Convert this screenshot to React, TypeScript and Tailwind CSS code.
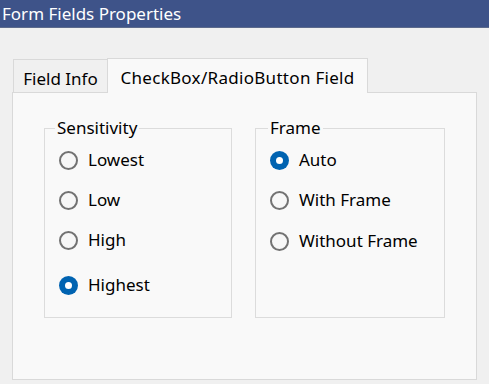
import { useState } from 'react';

type RadioProps = {
  label: string;
  checked: boolean;
  onSelect: () => void;
  className?: string;
};

function Radio({ label, checked, onSelect, className = '' }: RadioProps) {
  return (
    <label
      onClick={onSelect}
      className={`flex items-center h-[24px] gap-[10px] cursor-default ${className}`}
    >
      {checked ? (
        <span className="flex items-center justify-center w-[19px] h-[19px] rounded-full bg-[#0063b1]">
          <span className="w-[7px] h-[7px] rounded-full bg-white" />
        </span>
      ) : (
        <span className="w-[19px] h-[19px] rounded-full border-2 border-[#727272] bg-[#f7f7f7]" />
      )}
      <span className="text-[17px] leading-[24px] text-black">{label}</span>
    </label>
  );
}

const sensitivityOptions = ['Lowest', 'Low', 'High', 'Highest'];
const frameOptions = ['Auto', 'With Frame', 'Without Frame'];
// spacing between rows in the dialog is not uniform
const sensitivityGaps = ['mt-[9px]', 'mt-[16px]', 'mt-[16px]', 'mt-[21px]'];
const frameGaps = ['mt-[9px]', 'mt-[16px]', 'mt-[17px]'];

export default function App() {
  const [sensitivity, setSensitivity] = useState('Highest');
  const [frame, setFrame] = useState('Auto');
  const [tab, setTab] = useState(1);

  return (
    <div className="w-[489px] h-[384px] overflow-hidden bg-[#f0f0f0] font-['Noto_Sans',sans-serif]">
      {/* Title bar */}
      <div className="h-[28px] bg-[#3e5389] border-b border-[#5c6a8c] pl-[2px] text-[17px] leading-[27px] text-white">
        Form Fields Properties
      </div>

      <div className="px-[12px] pt-[29px]">
        {/* Tabs */}
        <div className="flex items-end pl-[1px] h-[35px]">
          <button
            onClick={() => setTab(0)}
            className="w-[95px] h-[33px] border border-b-0 border-[#d9d9d9] bg-[#f0f0f0] pt-[4px] text-[17px] leading-[23px] text-black text-center"
          >
            Field Info
          </button>
          <button
            onClick={() => setTab(1)}
            className="relative z-10 -ml-px -mb-px w-[261px] h-[35px] border border-b-0 border-[#d9d9d9] bg-[#f9f9f9] pt-[2px] text-[17px] leading-[23px] tracking-[0.3px] text-black text-center"
          >
            CheckBox/RadioButton Field
          </button>
        </div>

        {/* Panel */}
        <div className="h-[288px] border border-[#d9d9d9] bg-[#f9f9f9]">
          {tab === 1 && (
            <div className="flex pl-[31px] pt-[24px] gap-[23px]">
              <fieldset className="w-[188px] h-[201px] border border-[#dcdcdc] pl-[14px]">
                <legend className="ml-[-4px] px-[2px] text-[17px] leading-[22px] text-black">
                  Sensitivity
                </legend>
                {sensitivityOptions.map((opt, i) => (
                  <Radio
                    key={opt}
                    label={opt}
                    checked={sensitivity === opt}
                    onSelect={() => setSensitivity(opt)}
                    className={sensitivityGaps[i]}
                  />
                ))}
              </fieldset>

              <fieldset className="w-[190px] h-[201px] border border-[#dcdcdc] pl-[14px]">
                <legend className="ml-[-2px] px-[2px] text-[17px] leading-[22px] text-black">
                  Frame
                </legend>
                {frameOptions.map((opt, i) => (
                  <Radio
                    key={opt}
                    label={opt}
                    checked={frame === opt}
                    onSelect={() => setFrame(opt)}
                    className={frameGaps[i]}
                  />
                ))}
              </fieldset>
            </div>
          )}
        </div>
      </div>
    </div>
  );
}
